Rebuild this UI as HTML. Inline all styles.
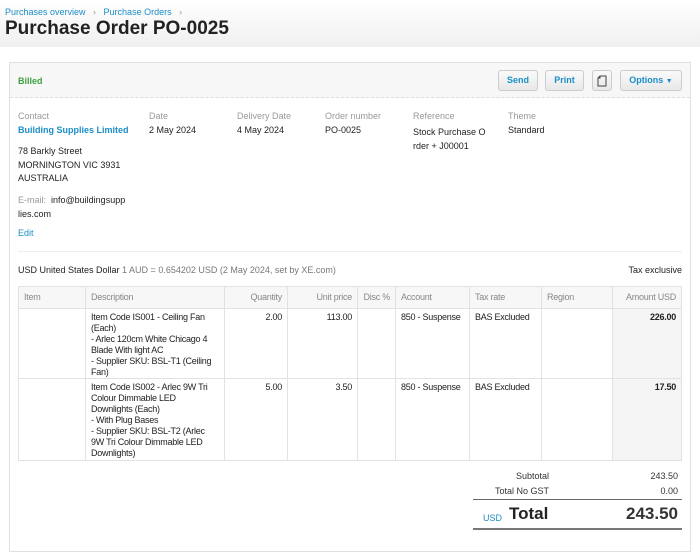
<!DOCTYPE html>
<html><head><meta charset="utf-8"><style>
*{margin:0;padding:0;box-sizing:border-box}
body{width:700px;height:549px;overflow:hidden;background:#fff;font-family:"Liberation Sans",sans-serif;font-size:9px;color:#222;position:relative}
.a{position:absolute;white-space:nowrap}
.top{position:absolute;left:0;top:0;width:700px;height:47px;background:linear-gradient(#fff,#f0f0f0)}
.crumb{color:#1b8ec7;font-size:9px}
.lbl{color:#999}
.blue{color:#1b8ec7}
.btn{position:absolute;top:70px;height:21px;border:1px solid #ccc;border-radius:3px;background:linear-gradient(#fafafa,#e8e8e8);color:#1b8ec7;font-weight:bold;font-size:9px;text-align:center;line-height:19px}
table{position:absolute;left:18px;top:286px;width:664px;border-collapse:collapse;font-size:9px;letter-spacing:-0.25px}
td,th{border:1px solid #e2e2e2;vertical-align:top;padding:3px 5px 0;line-height:11px}
th{font-weight:normal;color:#888;height:22px;text-align:left;background:#f7f7f7;padding-top:5px}
.r{text-align:right}
.amt{background:#f5f5f5}
</style></head><body>
<div class="top"></div>
<div class="a crumb" style="left:5px;top:7px">Purchases overview <span style="color:#999;margin:0 5px">›</span> Purchase Orders <span style="color:#999;margin-left:5px">›</span></div>
<div class="a" style="left:5px;top:18px;font-size:19px;font-weight:bold;color:#222">Purchase Order PO-0025</div>

<div style="position:absolute;left:9px;top:62px;width:682px;height:490px;border:1px solid #e0e0e0;background:#fff"></div>
<div style="position:absolute;left:10px;top:63px;width:680px;height:35px;background:#f7f7f7;border-bottom:1px dashed #ddd"></div>
<div class="a" style="left:18px;top:76px;color:#3ea03e;font-weight:bold">Billed</div>
<div class="btn" style="left:498px;width:40px">Send</div>
<div class="btn" style="left:545px;width:39px">Print</div>
<div class="btn" style="left:592px;width:20px"><svg width="10" height="12" viewBox="0 0 10 12" style="margin-top:4px"><path d="M3 1H9V11H1V3Z M3 1V3H1" fill="none" stroke="#444" stroke-width="1"/></svg></div>
<div class="btn" style="left:620px;width:62px">Options <span style="font-size:7px">▼</span></div>

<div class="a lbl" style="left:18px;top:111px">Contact</div>
<div class="a blue" style="left:18px;top:125px;font-weight:bold">Building Supplies Limited</div>
<div class="a" style="left:18px;top:145px;line-height:13.5px">78 Barkly Street<br>MORNINGTON VIC 3931<br>AUSTRALIA</div>
<div class="a" style="left:18px;top:193px;line-height:14px"><span class="lbl">E-mail:</span>&nbsp; info@buildingsupp<br>lies.com</div>
<div class="a blue" style="left:18px;top:228px">Edit</div>

<div class="a lbl" style="left:149px;top:111px">Date</div><div class="a" style="left:149px;top:125px">2 May 2024</div>
<div class="a lbl" style="left:237px;top:111px">Delivery Date</div><div class="a" style="left:237px;top:125px">4 May 2024</div>
<div class="a lbl" style="left:325px;top:111px">Order number</div><div class="a" style="left:325px;top:125px">PO-0025</div>
<div class="a lbl" style="left:413px;top:111px">Reference</div><div class="a" style="left:413px;top:125px;line-height:14px">Stock Purchase O<br>rder + J00001</div>
<div class="a lbl" style="left:508px;top:111px">Theme</div><div class="a" style="left:508px;top:125px">Standard</div>

<div style="position:absolute;left:18px;top:251px;width:664px;border-top:1px solid #eee"></div>
<div class="a" style="left:18px;top:265px">USD United States Dollar <span style="color:#777">1 AUD = 0.654202 USD (2 May 2024, set by XE.com)</span></div>
<div class="a" style="right:18px;top:265px">Tax exclusive</div>

<table>
<tr><th style="width:67px">Item</th><th style="width:139px">Description</th><th class="r" style="width:63px">Quantity</th><th class="r" style="width:70px">Unit price</th><th class="r" style="width:38px">Disc %</th><th style="width:74px">Account</th><th style="width:72px">Tax rate</th><th style="width:71px">Region</th><th class="r">Amount USD</th></tr>
<tr style="height:70px"><td></td><td>Item Code IS001 - Ceiling Fan (Each)<br>- Arlec 120cm White Chicago 4 Blade With light AC<br>- Supplier SKU: BSL-T1 (Ceiling Fan)</td><td class="r">2.00</td><td class="r">113.00</td><td></td><td>850 - Suspense</td><td>BAS Excluded</td><td></td><td class="r amt"><b>226.00</b></td></tr>
<tr style="height:82px"><td></td><td>Item Code IS002 - Arlec 9W Tri Colour Dimmable LED Downlights (Each)<br>- With Plug Bases<br>- Supplier SKU: BSL-T2 (Arlec 9W Tri Colour Dimmable LED Downlights)</td><td class="r">5.00</td><td class="r">3.50</td><td></td><td>850 - Suspense</td><td>BAS Excluded</td><td></td><td class="r amt"><b>17.50</b></td></tr>
</table>

<div class="a" style="right:151px;top:471px;color:#333">Subtotal</div><div class="a" style="right:22px;top:471px;color:#333">243.50</div>
<div class="a" style="right:151px;top:486px;color:#333">Total No GST</div><div class="a" style="right:22px;top:486px;color:#333">0.00</div>
<div style="position:absolute;left:473px;top:499px;width:209px;border-top:1px solid #666"></div>
<div class="a" style="left:483px;top:513px;color:#1b8ec7;font-size:9px">USD</div>
<div class="a" style="left:509px;top:504px;font-size:17px;font-weight:bold">Total</div>
<div class="a" style="right:22px;top:504px;font-size:17px;font-weight:bold;color:#333">243.50</div>
<div style="position:absolute;left:473px;top:528px;width:209px;border-top:2px solid #777"></div>
</body></html>
